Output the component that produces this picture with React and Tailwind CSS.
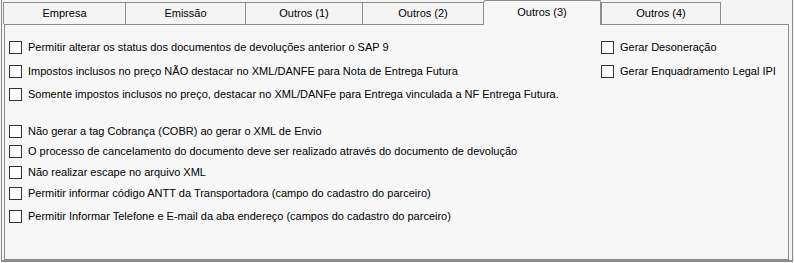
const TABS = [
  { label: "Empresa", width: "w-[122px]" },
  { label: "Emissão", width: "w-[120px]" },
  { label: "Outros (1)", width: "w-[117px]" },
  { label: "Outros (2)", width: "w-[121px]" },
  { label: "Outros (3)", width: "w-[118px]", active: true },
  { label: "Outros (4)", width: "w-[120px]", last: true },
];

const LEFT_TOP = [
  { label: "Permitir alterar os status dos documentos de devoluções anterior o SAP 9", gap: "mt-0" },
  { label: "Impostos inclusos no preço NÃO destacar no XML/DANFE para Nota de Entrega Futura", gap: "mt-[10px]" },
  { label: "Somente impostos inclusos no preço, destacar no XML/DANFe para Entrega vinculada a NF Entrega Futura.", gap: "mt-[9px]" },
];

const RIGHT_TOP = [
  { label: "Gerar Desoneração", gap: "mt-0" },
  { label: "Gerar Enquadramento Legal IPI", gap: "mt-[10px]" },
];

const BOTTOM = [
  { label: "Não gerar a tag Cobrança (COBR) ao gerar o XML de Envio", gap: "mt-[23px]" },
  { label: "O processo de cancelamento do documento deve ser realizado através do documento de devolução", gap: "mt-[6px]" },
  { label: "Não realizar escape no arquivo XML", gap: "mt-[7px]" },
  { label: "Permitir informar código ANTT da Transportadora (campo do cadastro do parceiro)", gap: "mt-[7px]" },
  { label: "Permitir Informar Telefone e E-mail da aba endereço (campos do cadastro do parceiro)", gap: "mt-[9px]" },
];

function CheckRow({ label, gap }) {
  return (
    <label className={`flex h-[14px] items-center gap-[6px] ${gap}`}>
      <span className="h-[13px] w-[13px] shrink-0 border border-[#333333] bg-white" />
      <span className="whitespace-nowrap leading-none">{label}</span>
    </label>
  );
}

function Tab({ label, width, active, last }) {
  if (active) {
    return (
      <div
        className={`relative z-10 -mb-px flex h-[25px] ${width} items-center justify-center rounded-tl-[3px] rounded-tr-[2px] border-l border-r border-t border-[#8c8c8c] bg-[#f7f7f7] pb-[2px]`}
      >
        {label}
      </div>
    );
  }
  return (
    <div
      className={`mt-[2px] flex h-[22px] ${width} items-center justify-center border-l border-t border-[#8c8c8c] bg-[#f4f4f4] ${last ? "border-r" : ""}`}
    >
      {label}
    </div>
  );
}

export default function App() {
  return (
    <div className="h-[263px] w-[794px] bg-[#f4f4f4] text-[11px] text-black [font-family:'Liberation_Sans',Arial,sans-serif]">
      <div className="ml-px h-[262px] w-[792px] border-b-2 border-l border-r border-[#8c8c8c] pl-px">
        <div className="flex h-[24px] items-start">
          {TABS.map((tab) => (
            <Tab key={tab.label} {...tab} />
          ))}
        </div>
        <div className="ml-px h-[236px] w-[785px] border border-[#8c8c8c] bg-[#f7f7f7] pl-[4px] pt-[15px]">
          <div className="grid grid-cols-[592px_1fr]">
            <div className="flex flex-col">
              {LEFT_TOP.map((row) => (
                <CheckRow key={row.label} {...row} />
              ))}
            </div>
            <div className="flex flex-col">
              {RIGHT_TOP.map((row) => (
                <CheckRow key={row.label} {...row} />
              ))}
            </div>
          </div>
          <div className="flex flex-col">
            {BOTTOM.map((row) => (
              <CheckRow key={row.label} {...row} />
            ))}
          </div>
        </div>
      </div>
    </div>
  );
}
